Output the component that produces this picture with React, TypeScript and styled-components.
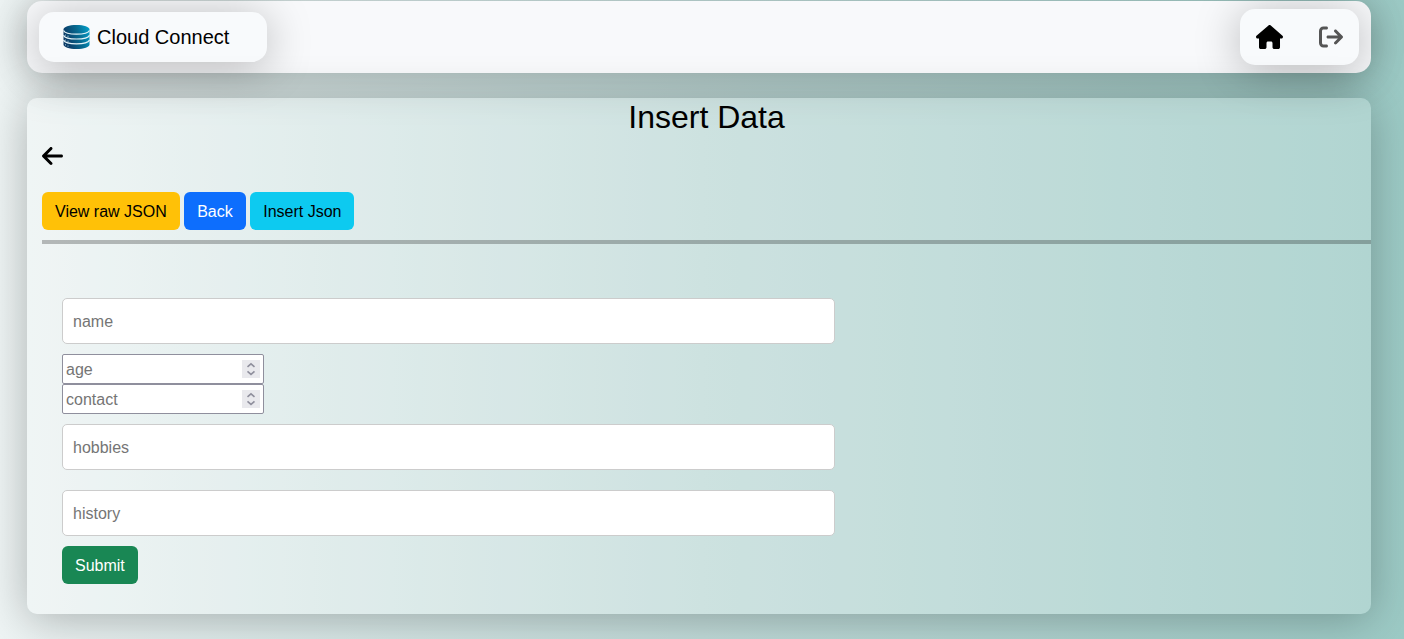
import React from "react";
import styled, { createGlobalStyle, css } from "styled-components";
import { FaArrowRightFromBracket } from "react-icons/fa6";

const GlobalStyle = createGlobalStyle`
  *, *::before, *::after { box-sizing: border-box; }
  html { min-height: 100%; background: linear-gradient(90deg, #eef4f4 0%, #c1dbd9 50%, #9ccac5 100%); }
  body {
    margin: 0;
    color: #000;
    font-family: "Liberation Sans", Arial, sans-serif;
    font-size: 16px;
    line-height: 24px;
  }
  button, input { font: inherit; }
`;

const raised = css`
  box-shadow: 0 5px 45px rgba(0, 0, 0, 0.27);
`;

const Page = styled.div`
  display: flex;
  flex-direction: column;
  gap: 25px;
  padding: 1px 33px 25px 27px;
`;

const Navbar = styled.nav`
  ${raised}
  display: flex;
  align-items: center;
  justify-content: space-between;
  padding: 8px 12px;
  border-radius: 15px;
  background: #f8f9fb;
`;

const Brand = styled.a`
  ${raised}
  display: flex;
  align-items: center;
  gap: 7px;
  height: 50px;
  padding: 0 38px 0 24px;
  border-radius: 15px;
  background: #f8fafc;
  color: #000;
  font-size: 20px;
  text-decoration: none;
`;

const NavLinks = styled.div`
  ${raised}
  display: flex;
  align-items: center;
  gap: 36px;
  height: 56px;
  padding: 0 16px;
  border-radius: 15px;
  background: #f8fafc;
`;

const IconLink = styled.a<{ $muted?: boolean }>`
  display: flex;
  color: ${(p) => (p.$muted ? "#555" : "#000")};
  font-size: 24px;
`;

const Card = styled.main`
  ${raised}
  padding: 0 0 30px 15px;
  border-radius: 10px;
  background: rgba(255, 255, 255, 0.2);
`;

const Title = styled.h1`
  margin: 0;
  font-size: 32px;
  font-weight: 400;
  line-height: 38px;
  text-align: center;
`;

const BackRow = styled.div`
  display: flex;
  padding: 8px 0 24px;
`;

const Toolbar = styled.div`
  line-height: 24px;
`;

const tones = {
  warning: ["#ffc107", "#000"],
  primary: ["#0d6efd", "#fff"],
  info: ["#0dcaf0", "#000"],
  success: ["#198754", "#fff"],
};

const Button = styled.button<{ $tone: keyof typeof tones }>`
  height: 38px;
  padding: 8px 13px 6px;
  border: 0;
  border-radius: 6px;
  background: ${(p) => tones[p.$tone][0]};
  color: ${(p) => tones[p.$tone][1]};
  vertical-align: top;
  cursor: pointer;
`;

const Divider = styled.hr`
  height: 4px;
  margin: 10px 0 44px;
  border: 0;
  background: rgba(0, 0, 0, 0.25);
`;

const Form = styled.form`
  display: flex;
  flex-direction: column;
  align-items: flex-start;
  padding: 0 20px;
`;

const TextInput = styled.input`
  width: 60%;
  height: 46px;
  margin: 10px 0;
  padding: 11px 10px 9px;
  border: 1px solid #ccc;
  border-radius: 5px;
  background: #fff;
  &::placeholder { color: #757575; }
`;

const NumberBox = styled.div`
  position: relative;
  display: flex;
`;

const NumberInput = styled.input`
  width: 202px;
  height: 30px;
  padding: 3px 24px 1px 3px;
  border: 1px solid #8f8f9d;
  border-radius: 2px;
  background: #fff;
  appearance: textfield;
  &::placeholder { color: #757575; }
  &::-webkit-inner-spin-button { appearance: none; margin: 0; }
`;

const Spinner = styled.svg`
  position: absolute;
  top: 6px;
  right: 4px;
  background: #e9e9ed;
  pointer-events: none;
`;

function DatabaseLogo() {
  return (
    <svg width="27" height="24" viewBox="0 0 27 24" aria-hidden="true">
      <defs>
        <linearGradient id="disk" x1="0" x2="1" y1="0.3" y2="0">
          <stop offset="0" stopColor="#0b3a66" />
          <stop offset="0.5" stopColor="#07698f" />
          <stop offset="1" stopColor="#04a4ce" />
        </linearGradient>
      </defs>
      <path
        fill="url(#disk)"
        d="M0.500 4.500C0.500 2 6 0 13.500 0s13 2 13 4.500v15c0 2.500-5.500 4.500-13 4.500s-13-2-13-4.500Z"
      />
      <g fill="none" stroke="#e3f2f7" strokeWidth="1.200">
        <path d="M0.500 5.500c1 2.300 6 3.700 13 3.700s12-1.400 13-3.700" />
        <path d="M0.500 10.300c1 2.300 6 3.700 13 3.700s12-1.400 13-3.700" />
        <path d="M0.500 15.100c1 2.300 6 3.700 13 3.700s12-1.400 13-3.700" />
      </g>
      <g fill="#b9dbe8">
        <circle cx="2.500" cy="10" r="0.600" /><circle cx="5" cy="11.200" r="0.600" />
        <circle cx="2.500" cy="15" r="0.600" /><circle cx="5" cy="16.200" r="0.600" />
        <circle cx="2.500" cy="19.800" r="0.600" /><circle cx="5" cy="21" r="0.600" />
      </g>
    </svg>
  );
}

function HouseIcon() {
  return (
    <svg width="27" height="24" viewBox="0 0 576 512" fill="currentColor" aria-hidden="true">
      <path d="M575.8 255.5c0 18-15 32.1-32 32.1h-32l.7 160.2c0 2.7-.2 5.4-.5 8.1V472c0 22.1-17.9 40-40 40H456c-1.1 0-2.2 0-3.3-.1c-1.4 .1-2.800 .1-4.200 .1H416 392c-22.100 0-40-17.900-40-40V448 384c0-17.700-14.300-32-32-32H256c-17.700 0-32 14.300-32 32v64 24c0 22.100-17.900 40-40 40H160 128.100c-1.500 0-3-.1-4.500-.2c-1.200 .1-2.400 .2-3.600 .2H104c-22.100 0-40-17.900-40-40V360c0-.9 0-1.900 .1-2.800V287.600H32c-18 0-32-14-32-32.100c0-9 3-17 10-24L266.400 8c7-7 15-8 22-8s15 2 21 7L564.800 231.500c8 7 12 15 11 24z" />
    </svg>
  );
}

function ArrowLeftIcon() {
  return (
    <svg width="21" height="24" viewBox="0 0 448 512" fill="currentColor" aria-hidden="true">
      <path d="M9.400 233.400c-12.500 12.500-12.500 32.800 0 45.300l160 160c12.500 12.500 32.800 12.500 45.300 0s12.500-32.800 0-45.300L109.200 288 416 288c17.700 0 32-14.300 32-32s-14.300-32-32-32l-306.700 0L214.600 118.600c12.500-12.500 12.500-32.800 0-45.300s-32.800-12.500-45.300 0l-160 160z" />
    </svg>
  );
}

function NumberField({ name }: { name: string }) {
  return (
    <NumberBox>
      <NumberInput type="number" name={name} placeholder={name} aria-label={name} />
      <Spinner width="18" height="18" viewBox="0 0 18 18" aria-hidden="true">
        <path d="M5.500 6.800 9 3.800l3.500 3M5.500 11.400 9 14.400l3.500-3" fill="none" stroke="#8f8f9d" strokeWidth="1.600" />
      </Spinner>
    </NumberBox>
  );
}

function TextField({ name }: { name: string }) {
  return <TextInput type="text" name={name} placeholder={name} aria-label={name} />;
}

export default function App() {
  return (
    <>
      <GlobalStyle />
      <Page>
        <Navbar>
          <Brand href="#">
            <DatabaseLogo />
            Cloud Connect
          </Brand>
          <NavLinks>
            <IconLink href="#" aria-label="Home"><HouseIcon /></IconLink>
            <IconLink href="#" aria-label="Log out" $muted><FaArrowRightFromBracket /></IconLink>
          </NavLinks>
        </Navbar>
        <Card>
          <Title>Insert Data</Title>
          <BackRow>
            <IconLink href="#" aria-label="Go back"><ArrowLeftIcon /></IconLink>
          </BackRow>
          <Toolbar>
            <Button type="button" $tone="warning">View raw JSON</Button>{" "}
            <Button type="button" $tone="primary">Back</Button>{" "}
            <Button type="button" $tone="info">Insert Json</Button>
          </Toolbar>
          <Divider />
          <Form onSubmit={(e) => e.preventDefault()}>
            <TextField name="name" />
            <NumberField name="age" />
            <NumberField name="contact" />
            <TextField name="hobbies" />
            <TextField name="history" />
            <Button type="submit" $tone="success">Submit</Button>
          </Form>
        </Card>
      </Page>
    </>
  );
}
